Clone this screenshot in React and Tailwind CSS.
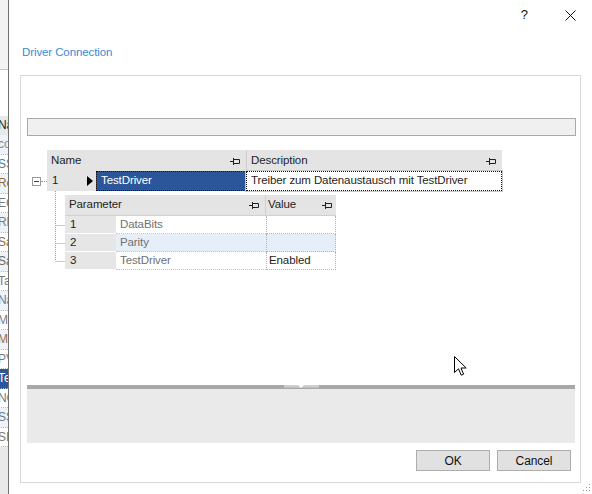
import React from 'react';

const stripRows = [
  { t: 'co', c: 'text-[#8a8a8a]', bg: 'bg-[#eef3f8]' },
  { t: 'SS', c: 'text-[#5a7aa0]', bg: 'bg-white' },
  { t: 'Re', c: 'text-[#9a6a3a]', bg: 'bg-[#eef3f8]' },
  { t: 'EC', c: 'text-[#7a7a7a]', bg: 'bg-white' },
  { t: 'RF', c: 'text-[#7a7a7a]', bg: 'bg-[#eef3f8]' },
  { t: 'Sa', c: 'text-[#9a6a3a]', bg: 'bg-white' },
  { t: 'Sa', c: 'text-[#6a6a6a]', bg: 'bg-[#eef3f8]' },
  { t: 'Ta', c: 'text-[#7a7a7a]', bg: 'bg-white' },
  { t: 'Na', c: 'text-[#6a7a9a]', bg: 'bg-[#eef3f8]' },
  { t: 'Mb', c: 'text-[#7a7a7a]', bg: 'bg-white' },
  { t: 'Mo', c: 'text-[#9a6a3a]', bg: 'bg-[#eef3f8]' },
  { t: 'PV', c: 'text-[#7a7a7a]', bg: 'bg-white' },
  { t: 'Te', c: 'text-white', bg: 'bg-[#2b579a]' },
  { t: 'NC', c: 'text-[#7a7a7a]', bg: 'bg-white' },
  { t: 'SS', c: 'text-[#6a7a9a]', bg: 'bg-[#eef3f8]' },
  { t: 'SIM', c: 'text-[#7a7a7a]', bg: 'bg-white' },
];

const Pin = () => (
  <svg width="10" height="8" viewBox="0 0 10 8" className="shrink-0">
    <path d="M0 4.5H3.5M3.5 1V8M3.5 2.5H9.5V6.5H3.5" stroke="#222" strokeWidth="1" fill="none" />
  </svg>
);

const LeftStrip = () => (
  <div className="w-[8px] h-full overflow-hidden flex flex-col bg-white text-[12px] leading-[19px]">
    <div className="h-[70px] bg-[#f3f3f3] border-b border-[#c8c8c8]" />
    <div className="h-[46px]" />
    <div className="h-[19px] bg-[#e8e8e8] text-[#222] -ml-[2px] whitespace-nowrap">Na</div>
    {stripRows.map((r, i) => (
      <div
        key={i}
        className={`h-[19.5px] ${r.bg} ${r.c} -ml-[2px] whitespace-nowrap border-b border-dotted border-[#b8b8b8]`}
      >
        {r.t}
      </div>
    ))}
    <div className="flex-1 bg-[#e9e9e9]" />
  </div>
);

export default function App() {
  return (
    <div className="relative w-[592px] h-[494px] flex overflow-hidden bg-white font-['Liberation_Sans',Arial,sans-serif] text-[11.5px] tracking-[-0.1px] text-[#1e1e1e]">
      <LeftStrip />
      <div className="w-px bg-[#707070]" />

      <div className="flex-1 flex flex-col bg-white">
        {/* title bar */}
        <div className="h-[30px] flex items-center justify-end">
          <span className="text-[13px] text-[#111] mr-[37px]">?</span>
          <svg width="11" height="11" viewBox="0 0 11 11" className="mr-[16px]">
            <path d="M0.5 0.5L10.5 10.5M10.5 0.5L0.5 10.5" stroke="#111" strokeWidth="1" />
          </svg>
        </div>

        <div className="mt-[14px] ml-[13px] h-[16px] leading-[16px] text-[#3b8ad6]">Driver Connection</div>

        {/* main panel */}
        <div className="mt-[15px] ml-[11px] w-[561px] h-[408px] border border-[#d9d9d9] flex flex-col">
          <div className="mt-[42px] ml-[6px] w-[549px] h-[18px] bg-[#f0f0f0] border border-[#a9a9a9]" />

          {/* master grid */}
          <div className="mt-[14px] flex flex-col">
            <div className="flex ml-[26px] h-[21px]">
              <div className="w-[200px] bg-[#e4e4e4] border-r border-[#cfcfcf] flex items-center justify-between pl-[4px] pr-[6px]">
                <span>Name</span>
                <Pin />
              </div>
              <div className="w-[255px] bg-[#e4e4e4] flex items-center justify-between pl-[4px] pr-[6px]">
                <span>Description</span>
                <Pin />
              </div>
            </div>

            <div className="flex h-[20px] items-center">
              <div className="w-[26px] flex items-center">
                <div className="ml-[11px] w-[9px] h-[9px] border border-[#9a9a9a] flex items-center justify-center bg-white">
                  <div className="w-[5px] h-px bg-[#444]" />
                </div>
                <div className="flex-1 border-t border-dotted border-[#9a9a9a]" />
              </div>
              <div className="w-[49px] h-full bg-[#e4e4e4] flex items-center justify-between pl-[5px] pr-[3px]">
                <span>1</span>
                <svg width="6" height="10" viewBox="0 0 6 10">
                  <path d="M0 0L6 5L0 10Z" fill="#000" />
                </svg>
              </div>
              <div className="w-[150px] h-full bg-[#2b579a] text-white border border-dotted border-[#111] flex items-center pl-[4px]">
                TestDriver
              </div>
              <div className="w-[256px] h-full bg-white border border-dotted border-[#111] flex items-center pl-[4px] outline outline-1 outline-[#c8c8c8]">
                Treiber zum Datenaustausch mit TestDriver
              </div>
            </div>

            {/* detail grid */}
            <div className="flex ml-[26px]">
              <svg width="18" height="80" viewBox="0 0 18 80" className="shrink-0">
                <path
                  d="M8.5 0V70M8.5 34.5H18M8.5 52.5H18M8.5 70.5H18"
                  stroke="#9a9a9a"
                  strokeWidth="1"
                  strokeDasharray="1 1"
                  fill="none"
                />
              </svg>
              <div className="mt-[4px] flex flex-col w-[271px]">
                <div className="flex h-[21px] border-b border-[#d0d0d0]">
                  <div className="w-[201px] bg-[#e4e4e4] border-r border-[#cfcfcf] flex items-center justify-between pl-[4px] pr-[6px]">
                    <span>Parameter</span>
                    <Pin />
                  </div>
                  <div className="w-[70px] bg-[#e4e4e4] flex items-center justify-between pl-[2px] pr-[4px]">
                    <span>Value</span>
                    <Pin />
                  </div>
                </div>
                {[
                  ['1', 'DataBits', '', 'bg-white'],
                  ['2', 'Parity', '', 'bg-[#e6eef8]'],
                  ['3', 'TestDriver', 'Enabled', 'bg-white'],
                ].map(([n, p, v, bg]) => (
                  <div key={n} className="flex h-[18px]">
                    <div className="w-[51px] bg-[#e6e6e6] border-b border-white pl-[5px] flex items-center">{n}</div>
                    <div className={`w-[150px] ${bg} text-[#707070] pl-[4px] flex items-center border-b border-dotted border-[#c4c4c4]`}>
                      {p}
                    </div>
                    <div className={`w-[70px] ${bg} pl-[2px] flex items-center border-l border-r border-b border-dotted border-[#b4b4b4]`}>
                      {v}
                    </div>
                  </div>
                ))}
              </div>
            </div>
          </div>

          <div className="flex-1" />

          {/* splitter */}
          <div className="ml-[6px] w-[548px] h-[4px] bg-[#a8a8a8] flex justify-center">
            <div className="w-[35px] h-[3px] bg-gradient-to-b from-[#d6d6d6] to-[#bdbdbd] flex justify-center">
              <svg width="6" height="3" viewBox="0 0 6 3">
                <path d="M0 0H6L3 3Z" fill="#fff" />
              </svg>
            </div>
          </div>
          <div className="ml-[6px] w-[548px] h-[54px] bg-[#eaeaea]" />

          <div className="mt-[7px] h-[21px] flex justify-end gap-[7px] pr-[9px]">
            <button className="w-[74px] h-[21px] bg-[#e1e1e1] border border-[#adadad] text-[12px] text-[#111]">OK</button>
            <button className="w-[74px] h-[21px] bg-[#e1e1e1] border border-[#adadad] text-[12px] text-[#111]">Cancel</button>
          </div>
          <div className="h-[11px]" />
        </div>
      </div>

      {/* mouse cursor */}
      <svg width="13" height="21" viewBox="0 0 13 21" className="absolute left-[454px] top-[356px]">
        <path
          d="M0.5 0.5V16.5L4.5 12.8L7.2 19.2L9.6 18.2L7 12H12.2Z"
          fill="#fff"
          stroke="#000"
          strokeWidth="1"
          strokeLinejoin="miter"
        />
      </svg>

      {/* resize grip */}
      <svg width="8" height="8" viewBox="0 0 8 8" className="absolute right-[1px] bottom-[2px]">
        <rect x="6" y="0" width="1" height="1" fill="#9a9a9a" />
        <rect x="3" y="3" width="1" height="1" fill="#9a9a9a" />
        <rect x="6" y="3" width="1" height="1" fill="#9a9a9a" />
        <rect x="0" y="6" width="1" height="1" fill="#9a9a9a" />
        <rect x="3" y="6" width="1" height="1" fill="#9a9a9a" />
        <rect x="6" y="6" width="1" height="1" fill="#9a9a9a" />
      </svg>
    </div>
  );
}
